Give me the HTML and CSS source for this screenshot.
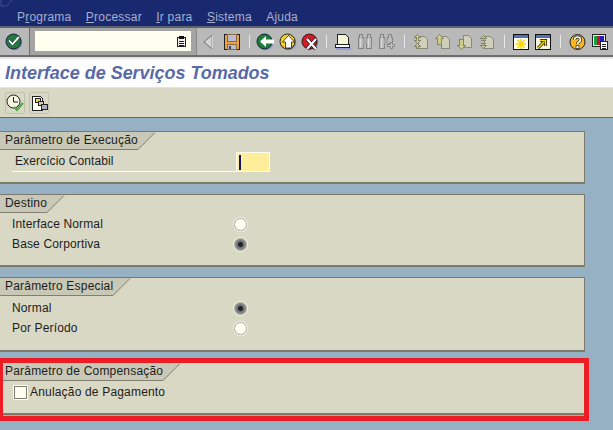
FILE: index.html
```html
<!DOCTYPE html>
<html lang="pt">
<head>
<meta charset="utf-8">
<title>Interface de Serviços Tomados</title>
<link rel="stylesheet" href="styles.css">
</head>
<body>
<header class="menubar">
  <svg class="corner" width="14" height="8" viewBox="0 0 14 8"><path d="M1 0v6h6l5-6" fill="none" stroke="#3f4f8c"/></svg>
  <nav class="menu">
    <span>P<u>r</u>ograma</span><span><u>P</u>rocessar</span><span><u>I</u>r para</span><span><u>S</u>istema</span><span>A<u>j</u>uda</span>
  </nav>
</header>
<div class="toolbar">
  <div class="tb-left">
    <span class="cell"><svg width="18" height="18" viewBox="0 0 18 18"><circle cx="9.700" cy="9.700" r="7.600" fill="#8f8fc4"/><circle cx="8.500" cy="8.500" r="7.500" fill="#1f7a3c" stroke="#123"/><path d="M3 8l1.500-1.500 3 3L13 3l2 1.500L7.500 13z" fill="#fff" stroke="#123" stroke-width=".6"/></svg></span>
  </div>
  <div class="tb-field">
    <div class="cmd"><svg width="9" height="11" viewBox="0 0 9 11" shape-rendering="crispEdges"><path d="M.5 1.500h8v9h-8z" fill="#eee" stroke="#222"/><path d="M2 0h5v3H2z" fill="#111"/><path d="M2 5h5M2 7h5M2 9h5" stroke="#222"/></svg></div>
  </div>
  <div class="tb-right">
    <span class="cell"><svg width="10" height="14" viewBox="0 0 10 14"><path d="M8.500 .5v13L1 7z" fill="#d4d4d4" stroke="#6c6c6c"/><path d="M9 1v12" stroke="#f0f0f0"/></svg></span>
    <span class="cell cell-save"><svg width="16" height="16" viewBox="0 0 16 16" shape-rendering="crispEdges"><path d="M.5.5h15v15H.5z" fill="#f0a040" stroke="#222"/><path d="M3.500 .5h9v7h-9z" fill="#bcbcd0" stroke="#8a6a40"/><path d="M3.500 10.500h9v5h-9z" fill="#bcbcd0" stroke="#8a6a40"/><path d="M5 12h2v3H5z" fill="#444"/></svg></span>
    <span class="sep sep-w"></span>
    <span class="cell"><svg width="20" height="18" viewBox="0 0 20 18"><circle cx="9.700" cy="9.700" r="7.600" fill="#8f8fc4"/><circle cx="8.500" cy="8.500" r="7.500" fill="#1f7a3c" stroke="#123"/><path d="M4 8.500l6-5.500v3.500h8v4h-8V14z" fill="#fff"/></svg></span>
    <span class="cell"><svg width="18" height="18" viewBox="0 0 18 18"><circle cx="9.700" cy="9.700" r="7.600" fill="#8f8fc4"/><circle cx="8.500" cy="8.500" r="7.500" fill="#f8d020" stroke="#222"/><path d="M9.500 2.500l6 6.500h-3v6h-6V9h-3z" fill="#fff" stroke="#222" stroke-width=".8"/></svg></span>
    <span class="cell"><svg width="18" height="18" viewBox="0 0 18 18"><circle cx="9.700" cy="9.700" r="7.600" fill="#8f8fc4"/><circle cx="8.500" cy="8.500" r="7.500" fill="#d81828" stroke="#311"/><path d="M6 6l9 10M15 6L6 16" stroke="#222" stroke-width="3.400"/><path d="M6 6l9 10M15 6L6 16" stroke="#fff" stroke-width="2"/></svg></span>
    <span class="sep"></span>
    <span class="cell"><svg width="16" height="16" viewBox="0 0 16 16" shape-rendering="crispEdges"><path d="M2.500.5h8l3 3v8h-11z" fill="#f6f6dc" stroke="#222"/><path d="M.5 10.500h14v3H.5z" fill="#fff" stroke="#222"/><path d="M1 14h15v1.500H1z" fill="#9a9ad8"/></svg></span>
    <span class="cell"><svg width="16" height="15" viewBox="0 0 16 15" shape-rendering="crispEdges"><path d="M2.500.5h3v3h1v11h-5v-11h1zM10.500.5h3v3h1v11h-5v-11h1z" fill="#bcbcbc" stroke="#858585"/><path d="M6 5h4v5H6z" fill="#a8a8a8"/><path d="M3.500 5v8M11.500 5v8" stroke="#dcdcdc"/></svg></span>
    <span class="cell"><svg width="16" height="15" viewBox="0 0 16 15" shape-rendering="crispEdges"><path d="M1.500.5h3v3h1v11h-5v-11h1zM9.500.5h3v3h1v6h-5v-6h1z" fill="#bcbcbc" stroke="#858585"/><path d="M5 5h4v5H5z" fill="#a8a8a8"/><path d="M2.500 5v8" stroke="#dcdcdc"/><path d="M8 11.500h8M12 8v7" stroke="#8a8a8a" stroke-width="3"/><path d="M9 11.500h6M12 9v5" stroke="#c8c8c8"/></svg></span>
    <span class="sep sep-w"></span>
    <span class="cell"><svg width="16" height="16" viewBox="0 0 16 16" shape-rendering="crispEdges"><path d="M5.500 2.500h6l3 3v9h-9z" fill="#cfcfba" stroke="#8a8a7c"/><path d="M4.500.5l3 3h-2v3h2l-3 3-3-3h2v-3h-2z" fill="#cccc88" stroke="#85856a"/><path d="M4.500 9.500l3 3h-2v2h-2v-2h-2z" fill="#cccc88" stroke="#85856a"/></svg></span>
    <span class="cell"><svg width="16" height="16" viewBox="0 0 16 16" shape-rendering="crispEdges"><path d="M6.500 2.500h5l3 3v9h-8z" fill="#cfcfba" stroke="#8a8a7c"/><path d="M4.500.5l4 4h-2v6h-4v-6h-2z" fill="#cccc88" stroke="#85856a"/></svg></span>
    <span class="cell"><svg width="16" height="16" viewBox="0 0 16 16" shape-rendering="crispEdges"><path d="M6.500 1.500h5l3 3v9h-8z" fill="#cfcfba" stroke="#8a8a7c"/><path d="M4.500 15.500l4-4h-2v-6h-4v6h-2z" fill="#cccc88" stroke="#85856a"/></svg></span>
    <span class="cell"><svg width="16" height="16" viewBox="0 0 16 16" shape-rendering="crispEdges"><path d="M5.500 2.500h6l3 3v9h-9z" fill="#cfcfba" stroke="#8a8a7c"/><path d="M4.500 1.500l3 3h-6zM4.500 14.500l-3-3h6z" fill="#cccc88" stroke="#85856a"/><path d="M2 6.500h5M2 9h5" stroke="#85856a"/></svg></span>
    <span class="sep sep-w"></span>
    <span class="cell"><svg width="16" height="16" viewBox="0 0 16 16" shape-rendering="crispEdges"><path d="M.5.500h15v15H.5z" fill="#fffff0" stroke="#111"/><path d="M1 1h14v3H1z" fill="#5070b8"/><path d="M8 5v10M3 10h10M4.500 6l7 8M11.500 6l-7 8" stroke="#f8d800" stroke-width="1.500" shape-rendering="auto"/></svg></span>
    <span class="cell"><svg width="16" height="16" viewBox="0 0 16 16" shape-rendering="crispEdges"><path d="M.5.500h15v15H.5z" fill="#f4f4e4" stroke="#111"/><path d="M1 1h14v3H1z" fill="#5070b8"/><path d="M3 14l6-6M5 6.500h5.500V12" fill="none" stroke="#111" stroke-width="3" shape-rendering="auto"/><path d="M3 14l6-6M5 6.500h5.500V12" fill="none" stroke="#f8d800" stroke-width="1.600" shape-rendering="auto"/></svg></span>
    <span class="sep sep-w"></span>
    <span class="cell"><svg width="18" height="18" viewBox="0 0 18 18"><circle cx="9.500" cy="9" r="7.500" fill="#f8b820" stroke="#222"/><path d="M6.500 7c0-4 6-4 6 0 0 2-3 2-3 4" fill="none" stroke="#222" stroke-width="3.200"/><path d="M6.500 7c0-4 6-4 6 0 0 2-3 2-3 4" fill="none" stroke="#fff" stroke-width="1.700"/><path d="M8 12.500h3v3H8z" fill="#fff" stroke="#222" stroke-width=".7"/></svg></span>
    <span class="cell cell-last"><svg width="16" height="16" viewBox="0 0 16 16" shape-rendering="crispEdges"><path d="M.5.500h13v12H.5z" fill="#eee" stroke="#222"/><path d="M2 2h3v9H2z" fill="#18a040"/><path d="M5 2h3v9H5z" fill="#d01020"/><path d="M8 2h4v9H8z" fill="#2020c0"/><path d="M8.500 7.500h7v8h-7z" fill="#fff" stroke="#222"/><path d="M10 10h4M10 12h4M10 14h4" stroke="#222"/></svg></span>
  </div>
</div>
<div class="title-wrap"><h1 class="title">Interface de Serviços Tomados</h1></div>
<div class="app-toolbar">
  <span class="app-btn"><svg width="18" height="18" viewBox="0 0 18 18"><circle cx="7.500" cy="7.500" r="6.500" fill="#f6f6e4" stroke="#222"/><path d="M7.500 3v5H12" fill="none" stroke="#222"/><path d="M8 13l3 3 6-7" fill="none" stroke="#50a848" stroke-width="2.200"/></svg></span>
  <span class="app-btn"><svg width="17" height="17" viewBox="0 0 17 17" shape-rendering="crispEdges"><path d="M1.500 1.500h8l2 2v12h-10z" fill="#fffff4" stroke="#222"/><path d="M4.500 3.500h5v4h-5z" fill="#f8d040" stroke="#222"/><path d="M7.500 6.500h5v4h-5z" fill="#d0d0b8" stroke="#222"/><path d="M10.500 9.500h6v5h-6z" fill="#b0b0c0" stroke="#222"/></svg></span>
</div>
<main class="content">
  <section class="panel panel-short">
    <div class="tab"><span class="tab-label">Parâmetro de Execução</span><svg class="slant" width="18" height="18" viewBox="0 0 18 18"><path d="M0 18L17 0H0z" fill="#c9c8b6"/><path d="M0 17.500L17 .5" stroke="#807f70" fill="none"/></svg></div>
    <div class="field-row"><span class="field-label">Exercício Contabil</span><span class="field-input"><i class="caret"></i></span></div>
  </section>
  <section class="panel panel-tall">
    <div class="tab"><span class="tab-label">Destino</span><svg class="slant" width="18" height="18" viewBox="0 0 18 18"><path d="M0 18L17 0H0z" fill="#c9c8b6"/><path d="M0 17.500L17 .5" stroke="#807f70" fill="none"/></svg></div>
    <div class="radio-row"><span class="radio-label">Interface Normal</span><i class="radio"></i></div>
    <div class="radio-row"><span class="radio-label">Base Corportiva</span><i class="radio on"></i></div>
  </section>
  <section class="panel panel-taller">
    <div class="tab"><span class="tab-label">Parâmetro Especial</span><svg class="slant" width="18" height="18" viewBox="0 0 18 18"><path d="M0 18L17 0H0z" fill="#c9c8b6"/><path d="M0 17.500L17 .5" stroke="#807f70" fill="none"/></svg></div>
    <div class="radio-row"><span class="radio-label">Normal</span><i class="radio on"></i></div>
    <div class="radio-row"><span class="radio-label">Por Período</span><i class="radio"></i></div>
  </section>
  <section class="panel panel-short panel-marked">
    <div class="tab"><span class="tab-label">Parâmetro de Compensação</span><svg class="slant" width="18" height="18" viewBox="0 0 18 18"><path d="M0 18L17 0H0z" fill="#c9c8b6"/><path d="M0 17.500L17 .5" stroke="#807f70" fill="none"/></svg></div>
    <div class="check-row"><i class="check"></i><span>Anulação de Pagamento</span></div>
    <div class="highlight"></div>
  </section>
</main>
</body>
</html>
```
FILE: styles.css
```css
* { box-sizing: border-box; }
html, body { margin: 0; height: 100%; overflow: hidden; }
body { background: #96b1c4; font: 12px/14px "Liberation Sans", Arial, sans-serif; color: #1c1c1c; }

.menubar { position: relative; height: 26px; background: #18296f; }
.corner { position: absolute; left: 0; top: 0; }
.menu { display: flex; gap: 14.4px; padding: 10px 0 0 17px; color: #a7b0cf; letter-spacing: .22px; }

.toolbar { display: flex; height: 31px; background: #b7b7b7; border-top: 2px solid #5e6270; border-bottom: 2px solid #6e6e6e; }
.tb-left { display: flex; align-items: center; width: 30px; padding-left: 3px; background: #b9b9b9; border-right: 1px solid #6e6e6e; }
.tb-field { width: 167px; padding: 3px 0 0 5px; background: #a4a4a4; border-right: 1px solid #8a8a8a; }
.tb-right { display: flex; align-items: center; flex: 1; background: #b9b9b9; }
.cmd { display: flex; align-items: center; justify-content: flex-end; width: 156px; height: 20px; padding-right: 5px; background: #fffff0; }
.cell { display: flex; align-items: center; justify-content: center; flex: none; width: 22px; height: 22px; }
.cell-save { margin-left: 2px; }
.cell-last { margin-left: 1px; }
.sep { flex: none; width: 11px; height: 13px; background: linear-gradient(#e8e8e8, #e8e8e8) center / 1px 100% no-repeat; }
.sep-w { width: 12px; }

.title-wrap { height: 31px; padding-top: 2px; background: linear-gradient(#d8d8d8, #fff 3px); border-bottom: 1px solid #e4e3d6; }
.title { margin: 0; padding: 3px 0 0 5px; color: #5a6aa8; font: italic bold 18px/22px "Liberation Sans", Arial, sans-serif; letter-spacing: -.03px; }

.app-toolbar { display: flex; gap: 4px; height: 30px; padding: 4px 0 0 5px; background: #d9d8c5; border-bottom: 1px solid #5d6a72; }
.app-btn { display: flex; align-items: center; justify-content: center; width: 20px; height: 22px; border: 1px solid #c2c1ae; border-radius: 2px; }

.content { display: flex; flex-direction: column; gap: 10px; width: 585px; padding-top: 13px; }
.panel { position: relative; background: #d9d8c5; border-top: 1px solid #7a7a6c; border-bottom: 2px solid #7a7a6c; border-right: 1px solid #7a7a6c; }
.panel-short { height: 53px; }
.panel-tall { height: 73px; }
.panel-taller { height: 75px; }
.tab { display: flex; height: 18px; }
.tab-label { height: 18px; padding: 1px 0 0 5px; background: #c9c8b6; border-bottom: 1px solid #807f70; letter-spacing: .2px; white-space: nowrap; }
.slant { display: block; flex: none; }

.field-row { display: flex; align-items: flex-end; height: 21px; margin: 1px 0 0 12px; }
.field-label { width: 224px; height: 20px; padding: 2px 0 0 3px; border-bottom: 1px solid #fffff4; letter-spacing: .1px; }
.field-input { display: flex; align-items: center; width: 34px; height: 20px; padding-left: 2px; background: #ffee99; border: 1px solid #fffff4; }
.caret { width: 2px; height: 15px; background: #14145c; }

.radio-row { display: flex; align-items: center; height: 20px; padding-left: 12px; }
.tab + .radio-row { margin-top: 1px; }
.panel-taller .tab + .radio-row { margin-top: 2px; }
.radio-label { width: 222px; letter-spacing: .14px; }
.radio { width: 13px; height: 13px; background: #fffff4; border: 1px solid #a8a89c; border-radius: 50%; box-shadow: 0 0 0 1px #f0efe2; }
.radio.on { background: radial-gradient(circle, #1c2430 0 2px, #707070 3px, #9a9a9a 6px); }

.check-row { display: flex; align-items: center; gap: 3px; height: 16px; margin: 3px 0 0 14px; letter-spacing: .18px; }
.check { width: 13px; height: 13px; background: #fffff0; border: 1px solid #7c7c70; box-shadow: 0 0 0 1px #fffff4; }

.highlight { position: absolute; left: 0; top: -5px; width: 589px; height: 63px; border: 5px solid #ee1c25; border-left-width: 3px; }
```
